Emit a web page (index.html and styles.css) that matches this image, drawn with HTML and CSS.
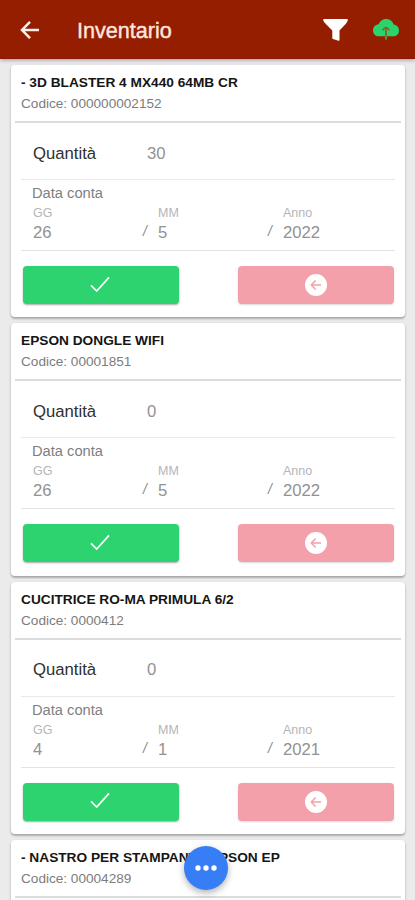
FILE: index.html
```html
<!DOCTYPE html>
<html lang="it">
<head>
<meta charset="utf-8">
<meta name="viewport" content="width=device-width, initial-scale=1">
<title>Inventario</title>
<link rel="stylesheet" href="styles.css">
</head>
<body>
<svg class="defs" aria-hidden="true">
  <symbol id="check" viewBox="0 0 20 18"><path d="M1 9.3 6.7 15 19 1.4" fill="none" stroke="#fff" stroke-width="1.7"/></symbol>
  <symbol id="back" viewBox="0 0 22 22"><circle cx="11" cy="11" r="11" fill="#fff"/><path d="M10.6 6.6 6.3 11l4.3 4.4M6.5 11H16" fill="none" stroke="#f4a0aa" stroke-width="1.5"/></symbol>
</svg>
<header class="toolbar">
  <svg class="arrow" viewBox="0 0 20 20"><path d="M10 1.800 2 10l8 8.200M2 10h17" fill="none" stroke="#ffeeea" stroke-width="2.5"/></svg>
  <h1>Inventario</h1>
  <svg class="filter" viewBox="0 0 25 22"><path d="M1 0h23q1 0 .8 1.2c-.2 2-4.500 6.500-8.300 10.200v9.600q0 1-1 .7l-5.600-1.800q-.6-.2-.6-1v-7.500C5.500 7.600.6 3.200.2 1.200Q0 0 1 0Z" fill="#fff"/></svg>
  <svg class="cloud" viewBox="0 0 26 21"><path d="M5.600 5.300C7 2 9.800 0 13 0c3.700 0 6.600 2.100 7.600 5.500 3.200.6 5.400 2.900 5.400 5.900 0 3.500-2.600 5.900-6 5.900H6c-3.500 0-6-2.500-6-5.900 0-3.200 2.300-5.500 5.600-6.100Z" fill="#2bd36c"/><path d="M9.800 11.200Q11.600 8.500 13 8.500t3.200 2.700M13 9.500v7.800" fill="none" stroke="#82602a" stroke-width="1.700"/><path d="M13 17.300v3.200" stroke="#5c9a3c" stroke-width="2"/></svg>
</header>
<main class="list">
  <article class="card">
    <div class="head"><h2>- 3D BLASTER 4 MX440 64MB CR</h2><p>Codice: 000000002152</p></div>
    <div class="qty"><span>Quantità</span><b>30</b></div>
    <div class="date"><h3>Data conta</h3>
      <div class="fields"><label>GG<b>26</b></label><label><i>/</i>MM<b>5</b></label><label><i>/</i>Anno<b>2022</b></label></div></div>
    <div class="actions"><button class="ok"><svg><use href="#check"/></svg></button><button class="undo"><svg><use href="#back"/></svg></button></div>
  </article>
  <article class="card">
    <div class="head"><h2>EPSON DONGLE WIFI</h2><p>Codice: 00001851</p></div>
    <div class="qty"><span>Quantità</span><b>0</b></div>
    <div class="date"><h3>Data conta</h3>
      <div class="fields"><label>GG<b>26</b></label><label><i>/</i>MM<b>5</b></label><label><i>/</i>Anno<b>2022</b></label></div></div>
    <div class="actions"><button class="ok"><svg><use href="#check"/></svg></button><button class="undo"><svg><use href="#back"/></svg></button></div>
  </article>
  <article class="card">
    <div class="head"><h2>CUCITRICE RO-MA PRIMULA 6/2</h2><p>Codice: 0000412</p></div>
    <div class="qty"><span>Quantità</span><b>0</b></div>
    <div class="date"><h3>Data conta</h3>
      <div class="fields"><label>GG<b>4</b></label><label><i>/</i>MM<b>1</b></label><label><i>/</i>Anno<b>2021</b></label></div></div>
    <div class="actions"><button class="ok"><svg><use href="#check"/></svg></button><button class="undo"><svg><use href="#back"/></svg></button></div>
  </article>
  <article class="card last">
    <div class="head"><h2>- NASTRO PER STAMPANTE EPSON EP</h2><p>Codice: 00004289</p></div>
  </article>
</main>
<button class="fab"><svg viewBox="0 0 22 6"><circle cx="3" cy="3" r="2.700"/><circle cx="11" cy="3" r="2.700"/><circle cx="19" cy="3" r="2.700"/></svg></button>
</body>
</html>
```

FILE: styles.css
```css
* { box-sizing: border-box; margin: 0; padding: 0; }
html, body { height: 900px; overflow: hidden; }
body { background: #ebebeb; font-family: "Liberation Sans", Arial, sans-serif; }
.defs { position: absolute; width: 0; height: 0; }
.toolbar {
  height: 59px; display: flex; align-items: center; padding: 0 16px 0 20px;
  background: #961e00; border-bottom: 1px solid #861a08;
  box-shadow: 0 1px 4px rgba(0, 0, 0, .35);
}
.arrow { width: 20px; height: 20px; margin-top: 2px; }
.toolbar h1 {
  flex: 1; margin: 3px 0 0 37px; font-size: 21.6px; line-height: 26px;
  font-weight: 400; color: #ffe5df; -webkit-text-stroke: .4px #ffe5df;
}
.filter { width: 25px; height: 22px; margin: 1px 25px 0 0; }
.cloud { width: 26px; height: 21px; margin-top: 1px; }
.list { height: 841px; overflow: hidden; display: flex; flex-direction: column; gap: 6.300px; padding: 6px 10px 0 11px; }
.card {
  height: 252.200px; flex: none; background: #fff; border-radius: 4px;
  box-shadow: 0 2px 2px rgba(0, 0, 0, .2), 0 1px 3px rgba(0, 0, 0, .15);
}
.card.last { height: auto; flex: 1; border-radius: 4px 4px 0 0; }
.head { height: 58px; margin: 0 4px; padding: 9px 6px 0; border-bottom: 2px solid #dcdcdc; }
.head h2 { font-size: 13.700px; line-height: 17px; color: #151515; white-space: nowrap; }
.head p { margin-top: 5px; font-size: 13.600px; line-height: 16px; color: #7c7c7c; white-space: nowrap; }
.qty {
  height: 57px; margin: 0 10px; padding: 5px 0 0 12px; display: flex; align-items: center;
  border-bottom: 1px solid #e9e9e9; font-size: 16.700px; color: #303030;
}
.qty span { width: 114px; }
b { font-weight: 400; color: #929292; }
.date { height: 71px; margin: 0 10px; padding: 5px 0 0 11px; border-bottom: 1px solid #e3e3e3; }
.date h3 { font-size: 14.700px; line-height: 17px; font-weight: 400; color: #7f7f7f; }
.fields { display: grid; grid-template-columns: 125px 125px 1fr; padding: 4px 0 0 1px; }
.fields label { position: relative; font-size: 12.500px; line-height: 14px; color: #b5b5b5; }
.fields b { display: block; margin-top: 3px; font-size: 16.700px; line-height: 19px; }
.fields i {
  position: absolute; left: -15px; top: 17px;
  font-size: 14px; line-height: 17px; color: #8b8b8b;
}
.actions { display: flex; justify-content: space-between; padding: 15px 11px 0 12px; }
.actions button {
  width: 156px; height: 38px; display: flex; align-items: center; justify-content: center;
  border: 0; border-radius: 4px; box-shadow: 0 1px 2px rgba(0, 0, 0, .35);
}
.ok { background: #2dd36f; }
.ok svg { width: 20px; height: 18px; margin: -1px 2px 0 0; }
.actions .undo { background: #f4a0aa; box-shadow: 0 1px 2px rgba(0, 0, 0, .15); }
.undo svg { width: 22px; height: 22px; }
.fab {
  position: absolute; left: 184px; top: 846px; width: 44px; height: 44px;
  display: flex; align-items: center; justify-content: center;
  border: 0; border-radius: 50%; background: #367df6; box-shadow: 0 3px 7px rgba(0, 0, 0, .3);
}
.fab svg { width: 22px; height: 6px; fill: #fff; }
```
